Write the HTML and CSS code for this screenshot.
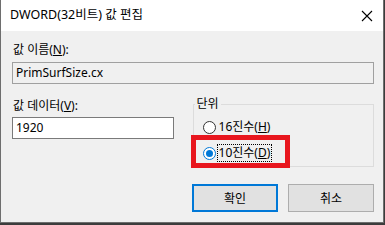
FILE: index.html
```html
<!DOCTYPE html>
<html lang="ko">
<head>
    <meta charset="UTF-8">
    <title>DWORD(32비트) 값 편집</title>
    <link rel="stylesheet" href="styles.css">
</head>
<body>
    <div class="window">
        <div class="titlebar">
            <span class="title">DWORD(32비트) 값 편집</span>
            <svg class="close" width="12" height="12" viewBox="0 0 12 12">
                <path d="M1 1 L11 11 M11 1 L1 11" stroke="#000" stroke-width="1.1" fill="none"/>
            </svg>
        </div>

        <div class="content">
            <div class="label label-name">값 이름(<u>N</u>):</div>
            <div class="textbox readonly">PrimSurfSize.cx</div>

            <div class="row">
                <div class="data-col">
                    <div class="label label-data">값 데이터(<u>V</u>):</div>
                    <div class="textbox">1920</div>
                </div>

                <div class="group">
                    <span class="group-title">단위</span>
                    <div class="radio">
                        <span class="radio-circle"></span>
                        <span class="radio-text">16진수(<u>H</u>)</span>
                    </div>
                    <div class="radio checked">
                        <span class="radio-circle"></span>
                        <span class="radio-text focus">10진수(<u>D</u>)</span>
                    </div>
                    <div class="highlight"></div>
                </div>
            </div>

            <div class="buttons">
                <div class="btn btn-default">확인</div>
                <div class="btn">취소</div>
            </div>
        </div>
    </div>
</body>
</html>
```

FILE: styles.css
```css
* {
    margin: 0;
    padding: 0;
    box-sizing: border-box;
}

body {
    background: #3c3c3c;
    font-family: "Noto Sans", "Noto Sans CJK KR", sans-serif;
    font-size: 12px;
    color: #000;
}

.window {
    width: 384px;
    height: 223px;
    background: #f0f0f0;
    border: 1px solid #6e6e6e;
    border-top: none;
}

.titlebar {
    height: 31px;
    background: #fff;
    display: flex;
    align-items: center;
    justify-content: space-between;
    padding: 0 10px 0 9px;
}

.title {
    font-size: 12.5px;
    line-height: 16px;
    padding-bottom: 1px;
}

.close {
    display: block;
    margin-top: 1px;
}

.content {
    padding: 11px 9px 0 11px;
}

.label {
    line-height: 16px;
    padding-left: 1px;
}

.label-name {
    margin-bottom: 4px;
}

.label-data {
    margin-top: 2px;
    margin-bottom: 3px;
}

u {
    text-decoration-thickness: 1px;
    text-underline-offset: 1px;
}

.textbox {
    height: 22px;
    border: 1px solid #7a7a7a;
    background: #fff;
    line-height: 20px;
    padding-left: 3px;
}

.textbox.readonly {
    background: #f0f0f0;
    border-color: #a0a0a0;
}

.row {
    display: flex;
    margin-top: 12px;
    gap: 19px;
}

.data-col {
    width: 162px;
}

.group {
    position: relative;
    width: 182px;
    height: 63px;
    margin-top: 8px;
    border: 1px solid #dcdcdc;
    padding: 14px 0 0 9px;
}

.group-title {
    position: absolute;
    top: -9px;
    left: 1px;
    padding: 0 2px;
    background: #f0f0f0;
    line-height: 16px;
}

.radio {
    display: flex;
    align-items: center;
    height: 16px;
    margin-bottom: 10px;
}

.radio-circle {
    width: 13px;
    height: 13px;
    border: 1px solid #333;
    border-radius: 50%;
    background: #fff;
    margin-right: 2px;
    display: flex;
    align-items: center;
    justify-content: center;
}

.radio.checked .radio-circle {
    border-color: #0078d7;
}

.radio.checked .radio-circle::after {
    content: "";
    width: 7px;
    height: 7px;
    border-radius: 50%;
    background: #0078d7;
}

.radio-text {
    line-height: 16px;
    padding: 0 1px;
}

.radio-text.focus {
    outline: 1px dotted #000;
    outline-offset: 0;
}

.highlight {
    position: absolute;
    left: -3px;
    top: 30px;
    width: 99px;
    height: 33px;
    border: 5px solid #e8161e;
}

.buttons {
    display: flex;
    justify-content: flex-end;
    gap: 10px;
    margin-top: 17px;
}

.btn {
    width: 86px;
    height: 28px;
    border: 1px solid #adadad;
    background: #e1e1e1;
    display: flex;
    align-items: center;
    justify-content: center;
}

.btn-default {
    border: 2px solid #0078d7;
}
```
